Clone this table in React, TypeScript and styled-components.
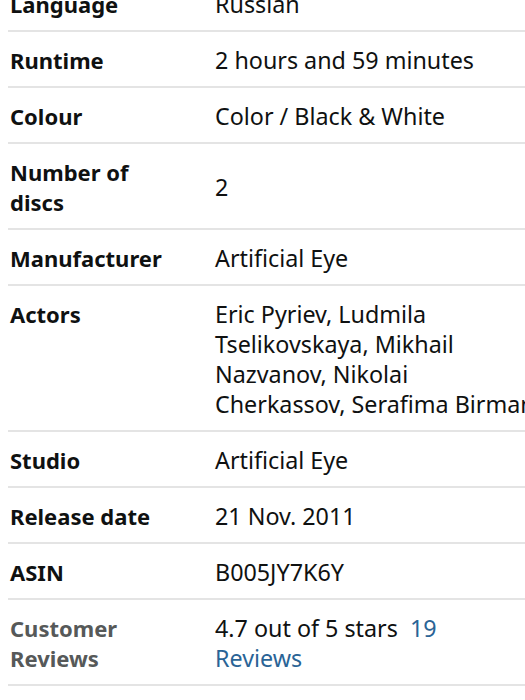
import styled, { createGlobalStyle } from "styled-components";

const GlobalStyle = createGlobalStyle`
	html, body {
		margin: 0;
		padding: 0;
		background: #ffffff;
		overflow: hidden;
	}
	body {
		font-family: "Noto Sans", "Open Sans", Arial, sans-serif;
		color: #0f1111;
	}
`;

interface Detail {
	label: string;
	value: React.ReactNode;
}

const details: Detail[] = [
	{ label: "Language", value: "Russian" },
	{ label: "Runtime", value: "2 hours and 59 minutes" },
	{ label: "Colour", value: "Color / Black & White" },
	{ label: "Number of discs", value: "2" },
	{ label: "Manufacturer", value: "Artificial Eye" },
	{
		label: "Actors",
		value:
			"Eric Pyriev, Ludmila Tselikovskaya, Mikhail Nazvanov, Nikolai Cherkassov, Serafima Birman",
	},
	{ label: "Studio", value: "Artificial Eye" },
	{ label: "Release date", value: "21 Nov. 2011" },
	{ label: "ASIN", value: "B005JY7K6Y" },
];

const App = () => {
	return (
		<>
			<GlobalStyle />
			<DetailsTable>
				{details.map((d) => (
					<Row key={d.label}>
						<Label>{d.label}</Label>
						<Value>{d.value}</Value>
					</Row>
				))}
				<Row>
					<Label $muted>Customer Reviews</Label>
					<Value $narrow>
						4.7 out of 5 stars&nbsp; <ReviewLink href="#">19 Reviews</ReviewLink>
					</Value>
				</Row>
			</DetailsTable>
		</>
	);
};

export default App;

const DetailsTable = styled.div`
	margin: -24px 0 0 8px;
	width: 545px;
	display: flex;
	flex-direction: column;
`;

const Row = styled.div`
	display: grid;
	grid-template-columns: 205px 326px;
	padding: 13px 0 11px 2px;
	border-bottom: 2px solid #e4e4e4;
	line-height: 30px;
`;

const Label = styled.div<{ $muted?: boolean }>`
	align-self: start;
	font-size: 22px;
	font-weight: 700;
	color: ${(p) => (p.$muted ? "#565959" : "#0f1111")};
	padding-right: 40px;
`;

const Value = styled.div<{ $narrow?: boolean }>`
	align-self: center;
	font-size: 23.3px;
	max-width: ${(p) => (p.$narrow ? "300px" : "none")};
`;

const ReviewLink = styled.a`
	color: #2a6496;
	text-decoration: none;
`;
